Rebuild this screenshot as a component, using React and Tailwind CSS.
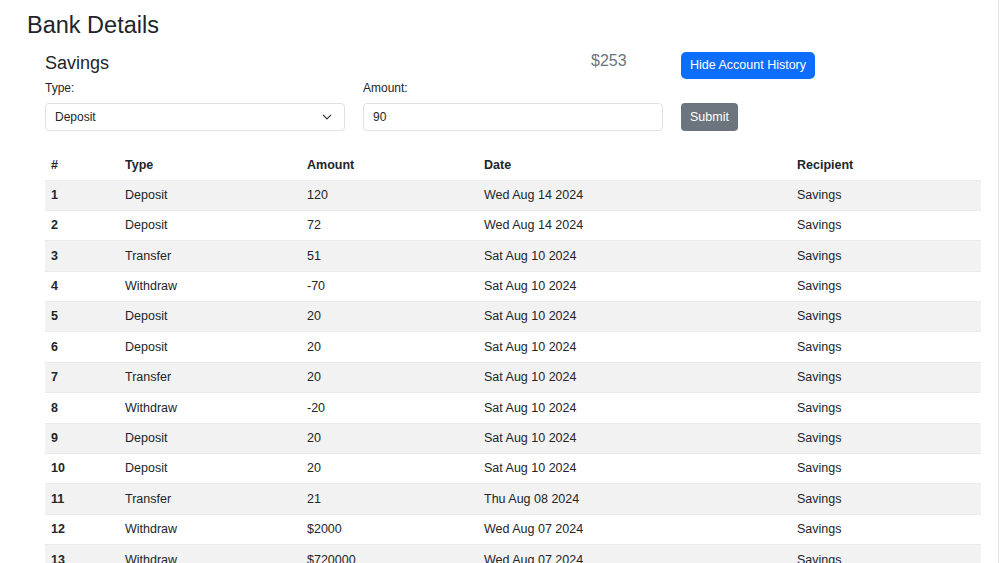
import React from 'react';

const rows = [
  ['1', 'Deposit', '120', 'Wed Aug 14 2024'],
  ['2', 'Deposit', '72', 'Wed Aug 14 2024'],
  ['3', 'Transfer', '51', 'Sat Aug 10 2024'],
  ['4', 'Withdraw', '-70', 'Sat Aug 10 2024'],
  ['5', 'Deposit', '20', 'Sat Aug 10 2024'],
  ['6', 'Deposit', '20', 'Sat Aug 10 2024'],
  ['7', 'Transfer', '20', 'Sat Aug 10 2024'],
  ['8', 'Withdraw', '-20', 'Sat Aug 10 2024'],
  ['9', 'Deposit', '20', 'Sat Aug 10 2024'],
  ['10', 'Deposit', '20', 'Sat Aug 10 2024'],
  ['11', 'Transfer', '21', 'Thu Aug 08 2024'],
  ['12', 'Withdraw', '$2000', 'Wed Aug 07 2024'],
  ['13', 'Withdraw', '$720000', 'Wed Aug 07 2024'],
];

const App = () => {
  return (
    <div className="h-[563px] overflow-hidden bg-white text-[#212529] font-['Liberation_Sans',Arial,sans-serif] border-r border-[#e5e5e5]">
      <h1 className="pl-[27px] pt-[10px] text-[23.5px] leading-[30px] font-normal">Bank Details</h1>

      <div className="pl-[45px] pr-[18px]">
        {/* account header */}
        <div className="flex items-start mt-[7px] h-[31px]">
          <h2 className="w-[546px] text-[18px] leading-[31px] pt-[1px]">Savings</h2>
          <div className="w-[90px] text-[16px] text-[#6c757d] leading-[20px] pt-[4px]">$253</div>
          <button className="mt-[5px] h-[27px] px-[9px] rounded-[5px] bg-[#0d6efd] text-white text-[12.5px]">
            Hide Account History
          </button>
        </div>

        {/* form */}
        <div className="flex items-end mt-[3px]">
          <div className="w-[318px]">
            <label className="block text-[12px] leading-[14px] mb-[8px]">Type:</label>
            <div className="w-[300px] h-[28px] border border-[#dee2e6] rounded-[4px] flex items-center justify-between pl-[9px] pr-[12px] text-[12px]">
              <span>Deposit</span>
              <svg width="10" height="10" viewBox="0 0 16 16" fill="none" stroke="#343a40" strokeWidth="2" strokeLinecap="round" strokeLinejoin="round">
                <path d="M2 5l6 6 6-6" />
              </svg>
            </div>
          </div>
          <div className="w-[318px]">
            <label className="block text-[12px] leading-[14px] mb-[8px]">Amount:</label>
            <div className="w-[300px] h-[28px] border border-[#dee2e6] rounded-[4px] flex items-center pl-[9px] text-[12px]">
              90
            </div>
          </div>
          <button className="h-[28px] px-[9px] rounded-[4px] bg-[#6c757d] text-white text-[12.5px]">Submit</button>
        </div>

        {/* history table */}
        <table className="mt-[20px] w-[936px] text-[12.5px] border-collapse table-fixed">
          <thead>
            <tr className="h-[29px] text-left">
              <th className="w-[74px] pl-[6px] font-bold">#</th>
              <th className="w-[182px] pl-[6px] font-bold">Type</th>
              <th className="w-[177px] pl-[6px] font-bold">Amount</th>
              <th className="w-[313px] pl-[6px] font-bold">Date</th>
              <th className="pl-[6px] font-bold">Recipient</th>
            </tr>
          </thead>
          <tbody>
            {rows.map((r, i) => (
              <tr key={r[0]} className={`h-[30.4px] border-t border-[#e9ecef] ${i % 2 === 0 ? 'bg-[#f2f2f2]' : 'bg-white'}`}>
                <td className="pl-[6px] font-bold">{r[0]}</td>
                <td className="pl-[6px]">{r[1]}</td>
                <td className="pl-[6px]">{r[2]}</td>
                <td className="pl-[6px]">{r[3]}</td>
                <td className="pl-[6px]">Savings</td>
              </tr>
            ))}
          </tbody>
        </table>
      </div>
    </div>
  );
};

export default App;
